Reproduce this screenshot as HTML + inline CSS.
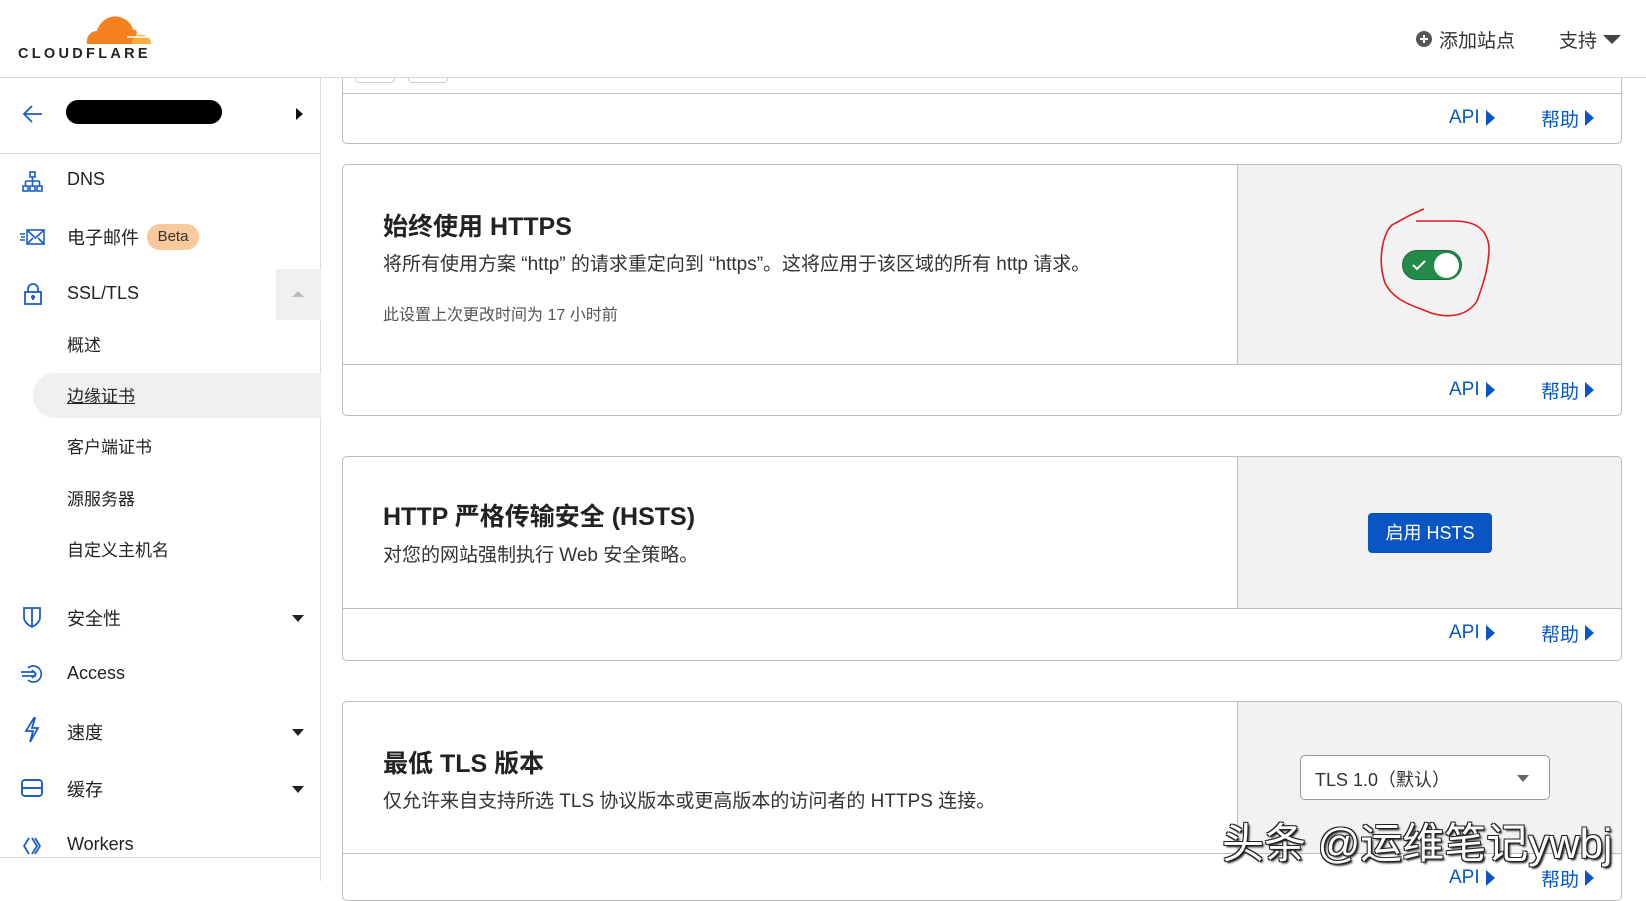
<!DOCTYPE html>
<html><head><meta charset="utf-8"><style>
*{margin:0;padding:0;box-sizing:border-box}
body{width:1646px;height:881px;overflow:hidden;background:#fff;font-family:"Liberation Sans","Noto Sans CJK SC",sans-serif;color:#222;position:relative}
.a{position:absolute;white-space:nowrap}
.hdr{position:absolute;left:0;top:0;width:1646px;height:78px;border-bottom:1px solid #d9d9d9;background:#fff;z-index:10}
.side{position:absolute;left:0;top:78px;width:321px;height:803px;border-right:1px solid #dcdcdc}
.nav{font-size:18px;color:#222}
.card{position:absolute;left:342px;width:1280px;border:1px solid #bdbdbd;border-radius:5px;background:#fff;overflow:hidden}
.rp{position:absolute;right:0;top:0;width:384px;background:#f2f2f2;border-left:1px solid #bdbdbd}
.sep{position:absolute;left:0;right:0;border-top:1px solid #bdbdbd}
.lk{position:absolute;font-size:19px;color:#0a55c4;display:flex;align-items:center;height:24px}
.tri{display:inline-block;width:0;height:0;border-top:8px solid transparent;border-bottom:8px solid transparent;border-left:9px solid #0a55c4;margin-left:6px}
.t{font-size:25px;font-weight:bold;color:#222}
.d{font-size:19px;color:#333}
.dd{position:absolute;width:0;height:0;border-left:6px solid transparent;border-right:6px solid transparent;border-top:7px solid #222}
</style></head><body>
<div class="hdr">
<svg class="a" style="left:0;top:0" width="170" height="70" viewBox="0 0 170 70">
<path d="M87 44 C86 36 91 31 97 31 C100 20 112 13 122 18 C128 20 132 25 133 30 C136 29 138 32 136 36 L134 44 Z" fill="#f48120"/>
<path d="M132 44 C132 38 137 34 142 35 C148 35 151 39 151 44 Z" fill="#faad3f"/>
<path d="M127 37 L150 37" stroke="#fff" stroke-width="1.5"/>
<text x="18" y="58" font-family="Liberation Sans" font-weight="bold" font-size="14.5" letter-spacing="3.3" fill="#222">CLOUDFLARE</text>
</svg>
<svg class="a" style="left:1416px;top:31px" width="16" height="16"><circle cx="8" cy="8" r="8" fill="#555"/><path d="M8 4v8M4 8h8" stroke="#fff" stroke-width="2"/></svg>
<div class="a" style="left:1439px;top:26px;font-size:19px;color:#333">添加站点</div>
<div class="a" style="left:1559px;top:26px;font-size:19px;color:#333">支持</div>
<div class="dd" style="left:1603px;top:35px;border-left-width:9px;border-right-width:9px;border-top-width:9px;border-top-color:#444"></div>
</div>

<div class="side">
<div class="a" style="left:0;top:75px;width:321px;border-top:1px solid #dcdcdc"></div>
<svg class="a" style="left:22px;top:26px" width="22" height="20"><path d="M20 10H2M10 2L2 10L10 18" fill="none" stroke="#1a5ec4" stroke-width="1.8"/></svg>
<div class="a" style="left:66px;top:22px;width:156px;height:24px;background:#000;border-radius:12px"></div>
<div class="a" style="left:296px;top:30px;width:0;height:0;border-top:6px solid transparent;border-bottom:6px solid transparent;border-left:7px solid #111"></div>

<svg class="a" style="left:22px;top:93px" width="22" height="22" fill="none" stroke="#1a5ec4" stroke-width="1.6"><rect x="8" y="1" width="5" height="5"/><path d="M10.5 6v4M3.5 10h14M3.5 10v5M10.5 10v5M17.5 10v5"/><rect x="1" y="15" width="5" height="5"/><rect x="8" y="15" width="5" height="5"/><rect x="15" y="15" width="5" height="5"/></svg>
<div class="a nav" style="left:67px;top:91px">DNS</div>

<svg class="a" style="left:19px;top:150px" width="28" height="20" fill="none" stroke="#1a5ec4" stroke-width="1.6"><rect x="8" y="2" width="17" height="14"/><path d="M8 2l8.5 8L25 2M8 16l6-6M25 16l-6-6M1 6h5M2 9h4M1 12h5"/></svg>
<div class="a nav" style="left:67px;top:146px">电子邮件</div>
<div class="a" style="left:147px;top:146px;width:52px;height:26px;border-radius:13px;background:#f9c89b;font-size:15px;line-height:26px;text-align:center;color:#333">Beta</div>

<div class="a" style="left:276px;top:191px;width:45px;height:51px;background:#f0f0f0"></div>
<div class="a" style="left:292px;top:213px;width:0;height:0;border-left:6px solid transparent;border-right:6px solid transparent;border-bottom:6px solid #bbb"></div>
<svg class="a" style="left:24px;top:205px" width="18" height="22" fill="none" stroke="#1a5ec4" stroke-width="1.8"><rect x="1" y="9" width="16" height="12"/><path d="M4 9V6a5 5 0 0110 0v3"/><circle cx="9" cy="14" r="1.2" fill="#1a5ec4"/><path d="M9 14v3"/></svg>
<div class="a nav" style="left:67px;top:205px">SSL/TLS</div>

<div class="a nav" style="left:67px;top:253px;font-size:17px">概述</div>
<div class="a" style="left:33px;top:295px;width:288px;height:45px;background:#f0f0f0;border-radius:22px 0 0 22px"></div>
<div class="a nav" style="left:67px;top:304px;font-size:17px;text-decoration:underline">边缘证书</div>
<div class="a nav" style="left:67px;top:355px;font-size:17px">客户端证书</div>
<div class="a nav" style="left:67px;top:407px;font-size:17px">源服务器</div>
<div class="a nav" style="left:67px;top:458px;font-size:17px">自定义主机名</div>

<svg class="a" style="left:23px;top:528px" width="18" height="22" fill="none" stroke="#1a5ec4" stroke-width="1.8"><path d="M1 2h16v9c0 5-4 8-8 10C5 19 1 16 1 11Z"/><path d="M9 2v18"/></svg>
<div class="a nav" style="left:67px;top:527px">安全性</div>
<div class="dd" style="left:292px;top:537px"></div>

<svg class="a" style="left:20px;top:586px" width="24" height="20" fill="none" stroke="#1a5ec4" stroke-width="1.7"><path d="M8 4a8 8 0 110 12"/><path d="M1 8h14M2 12h14M12 6l4 4-4 4"/></svg>
<div class="a nav" style="left:67px;top:585px">Access</div>

<svg class="a" style="left:24px;top:639px" width="16" height="26" fill="none" stroke="#1a5ec4" stroke-width="1.8"><path d="M10 1L2 14h7l-3 11L14 11H8l3-10Z"/></svg>
<div class="a nav" style="left:67px;top:641px">速度</div>
<div class="dd" style="left:292px;top:651px"></div>

<svg class="a" style="left:21px;top:700px" width="22" height="20" fill="none" stroke="#1a5ec4" stroke-width="1.9"><rect x="1" y="2" width="20" height="16" rx="3"/><path d="M1 10h20"/></svg>
<div class="a nav" style="left:67px;top:698px">缓存</div>
<div class="dd" style="left:292px;top:708px"></div>

<svg class="a" style="left:22px;top:758px" width="22" height="20" fill="none" stroke="#1a5ec4" stroke-width="1.8"><path d="M7 2L2 10l5 8M13 2l5 8-5 8M10 2l5 8-5 8"/></svg>
<div class="a nav" style="left:67px;top:756px">Workers</div>
<div class="a" style="left:0;top:779px;width:321px;border-top:1px solid #dcdcdc"></div>
</div>

<!-- card 1 -->
<div class="card" style="top:20px;height:124px">
<div class="a" style="left:12px;top:48px;width:40px;height:14px;border:1px solid #ccc;border-radius:4px"></div>
<div class="a" style="left:65px;top:48px;width:40px;height:14px;border:1px solid #ccc;border-radius:4px"></div>
<div class="sep" style="top:72px"></div>
<div class="lk" style="left:1106px;top:85px">API<span class="tri"></span></div>
<div class="lk" style="left:1198px;top:85px">帮助<span class="tri"></span></div>
</div>

<!-- card 2 -->
<div class="card" style="top:164px;height:252px">
<div class="rp" style="height:199px"></div>
<div class="a t" style="left:40px;top:42px">始终使用 HTTPS</div>
<div class="a d" style="left:40px;top:84px">将所有使用方案 “http” 的请求重定向到 “https”。这将应用于该区域的所有 http 请求。</div>
<div class="a" style="left:40px;top:136px;font-size:16px;color:#555">此设置上次更改时间为 17 小时前</div>
<div class="a" style="left:1059px;top:85px;width:60px;height:30px;border-radius:15px;background:#238a4a;border:1px solid #1a6b38"></div>
<svg class="a" style="left:1068px;top:93px" width="16" height="14"><path d="M2 7l4 4 8-8" fill="none" stroke="#fff" stroke-width="2"/></svg>
<div class="a" style="left:1091px;top:88px;width:25px;height:25px;border-radius:50%;background:#fff"></div>
<svg class="a" style="left:1030px;top:40px" width="140" height="120"><path d="M51 4 C40 8 30 14 19 20 C10 28 4 55 12 78 C22 98 45 102 58 108 C78 114 95 110 104 96 C112 74 116 60 116 42 C114 22 100 16 80 16 C66 16 48 16 43 16" fill="none" stroke="#e01b1b" stroke-width="1.6"/></svg>
<div class="sep" style="top:199px"></div>
<div class="lk" style="left:1106px;top:213px">API<span class="tri"></span></div>
<div class="lk" style="left:1198px;top:213px">帮助<span class="tri"></span></div>
</div>

<!-- card 3 -->
<div class="card" style="top:456px;height:205px">
<div class="rp" style="height:152px"></div>
<div class="a t" style="left:40px;top:40px">HTTP 严格传输安全 (HSTS)</div>
<div class="a d" style="left:40px;top:83px">对您的网站强制执行 Web 安全策略。</div>
<div class="a" style="left:1025px;top:56px;width:124px;height:40px;background:#0a55c4;border-radius:4px;color:#fff;font-size:18px;line-height:40px;text-align:center">启用 HSTS</div>
<div class="sep" style="top:151px"></div>
<div class="lk" style="left:1106px;top:164px">API<span class="tri"></span></div>
<div class="lk" style="left:1198px;top:164px">帮助<span class="tri"></span></div>
</div>

<!-- card 4 -->
<div class="card" style="top:701px;height:200px">
<div class="rp" style="height:151px"></div>
<div class="a t" style="left:40px;top:42px">最低 TLS 版本</div>
<div class="a d" style="left:40px;top:84px">仅允许来自支持所选 TLS 协议版本或更高版本的访问者的 HTTPS 连接。</div>
<div class="a" style="left:957px;top:53px;width:250px;height:45px;background:#fff;border:1px solid #999;border-radius:5px"></div>
<div class="a" style="left:972px;top:64px;font-size:18px;color:#333">TLS 1.0（默认）</div>
<div class="dd" style="left:1174px;top:73px;border-top-color:#666"></div>
<div class="sep" style="top:151px"></div>
<div class="lk" style="left:1106px;top:164px">API<span class="tri"></span></div>
<div class="lk" style="left:1198px;top:164px">帮助<span class="tri"></span></div>
</div>

<div class="a" style="left:1222px;top:810px;font-size:42px;color:#fff;text-shadow:1px 1px 0 #222,-1px -1px 0 #222,1px -1px 0 #222,-1px 1px 0 #222,2px 2px 2px #000">头条 @运维笔记ywbj</div>
</body></html>
